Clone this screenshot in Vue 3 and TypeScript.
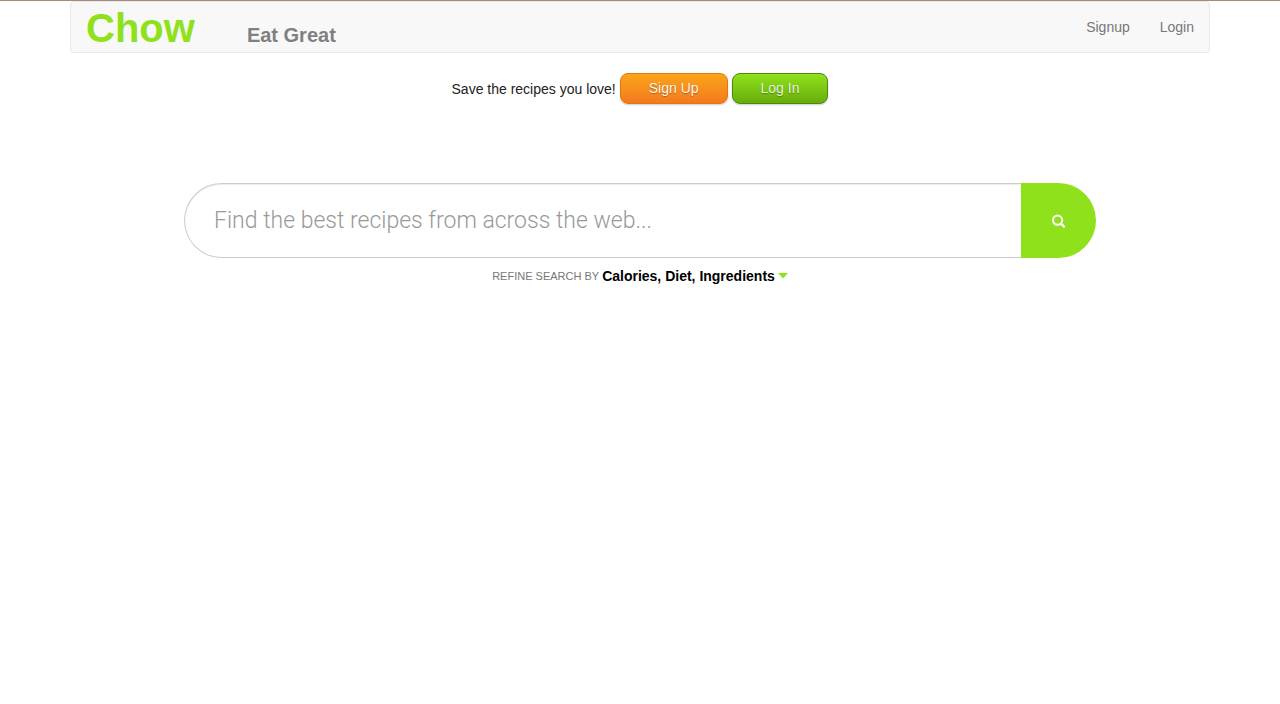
<script setup lang="ts">
import { ref } from 'vue'

const query = ref('')
const links: { label: string; href: string }[] = [
  { label: 'Signup', href: '#signup' },
  { label: 'Login', href: '#login' },
]
</script>

<template>
  <div class="page">
    <div class="container">
      <nav class="navbar">
        <a class="brand" href="#">Chow</a>
        <span class="tagline">Eat Great</span>
        <ul class="links">
          <li v-for="link in links" :key="link.label">
            <a :href="link.href">{{ link.label }}</a>
          </li>
        </ul>
      </nav>

      <div class="promo">
        <span>Save the recipes you love!</span>
        <button type="button" class="btn orange">Sign Up</button>
        <button type="button" class="btn green">Log In</button>
      </div>

      <form class="search" role="search" @submit.prevent>
        <input
          v-model="query"
          type="text"
          aria-label="Search recipes"
          placeholder="Find the best recipes from across the web..."
        />
        <button type="submit" aria-label="Search">
          <svg width="14" height="14" viewBox="0 0 14 14" aria-hidden="true">
            <circle cx="5.6" cy="6.2" r="4.6" fill="none" stroke="#fff" stroke-width="2" />
            <path d="M9 9.6L12 12.6" stroke="#fff" stroke-width="2.3" stroke-linecap="round" />
          </svg>
        </button>
      </form>

      <button type="button" class="refine">
        <span class="hint">REFINE SEARCH BY</span>
        <strong>Calories, Diet, Ingredients</strong>
        <svg width="10" height="6" viewBox="0 0 10 6" aria-hidden="true">
          <path d="M0 0H10L5 5.5Z" fill="#8fe21b" />
        </svg>
      </button>
    </div>
  </div>
</template>

<style>
body {
  margin: 0;
  background: #fff;
}
</style>

<style scoped>
.page,
.page * {
  box-sizing: border-box;
}
.page {
  border-top: 1px solid #a58b78;
  font: 14px/20px "Liberation Sans", Arial, sans-serif;
  color: #222;
}
button,
input {
  font-family: inherit;
}
a {
  text-decoration: none;
}
.container {
  max-width: 1140px;
  margin: 0 auto;
  display: flex;
  flex-direction: column;
  align-items: center;
}
.navbar {
  width: 100%;
  padding: 2px 15px 0;
  display: flex;
  align-items: baseline;
  background: #f8f8f8;
  border: 1px solid #e7e7e7;
  border-radius: 4px;
}
.brand {
  color: #8fe21b;
  font-size: 40px;
  line-height: 48px;
  font-weight: bold;
}
.tagline {
  margin-left: 52px;
  color: #808080;
  font-size: 20px;
  font-weight: bold;
}
.links {
  align-self: flex-start;
  display: flex;
  gap: 30px;
  margin: 0 0 0 auto;
  padding: 13px 0;
  list-style: none;
}
.links a {
  color: #777;
}
.promo {
  display: flex;
  align-items: center;
  gap: 4px;
  margin-top: 20px;
}
.btn {
  height: 31px;
  padding: 0 28px 2px;
  border: 1px solid;
  border-radius: 8px;
  font-size: 14px;
  color: #fef4e9;
  text-shadow: 0 1px 1px rgba(0, 0, 0, 0.3);
  box-shadow: 0 1px 2px rgba(0, 0, 0, 0.2);
}
.orange {
  border-color: #da7c0c;
  background: linear-gradient(#faa51a, #f47a20);
}
.green {
  border-color: #538312;
  color: #e8f0de;
  background: linear-gradient(#8fe21b, #68ad0b);
}
.search {
  width: 80%;
  height: 75px;
  margin-top: 79px;
  display: flex;
}
.search input {
  flex: 1;
  min-width: 0;
  padding: 0 29px;
  border: 1px solid #ccc;
  border-right: 0;
  border-radius: 38px 0 0 38px;
  box-shadow: inset 0 1px 1px rgba(0, 0, 0, 0.075);
  background: #fff;
  color: #555;
  font-family: Roboto, "Liberation Sans", sans-serif;
  font-size: 23px;
  font-weight: 300;
  outline: none;
}
.search input::placeholder {
  color: #999;
  opacity: 1;
}
.search button {
  width: 75px;
  padding: 0;
  display: flex;
  align-items: center;
  justify-content: center;
  border: 0;
  border-radius: 0 38px 38px 0;
  background: #8fe21b;
}
.refine {
  margin-top: 8px;
  padding: 0;
  display: flex;
  align-items: center;
  gap: 3px;
  border: 0;
  background: none;
  color: #000;
  font-size: 14px;
  line-height: 20px;
}
.hint {
  color: #777;
  font-size: 11px;
}
</style>
